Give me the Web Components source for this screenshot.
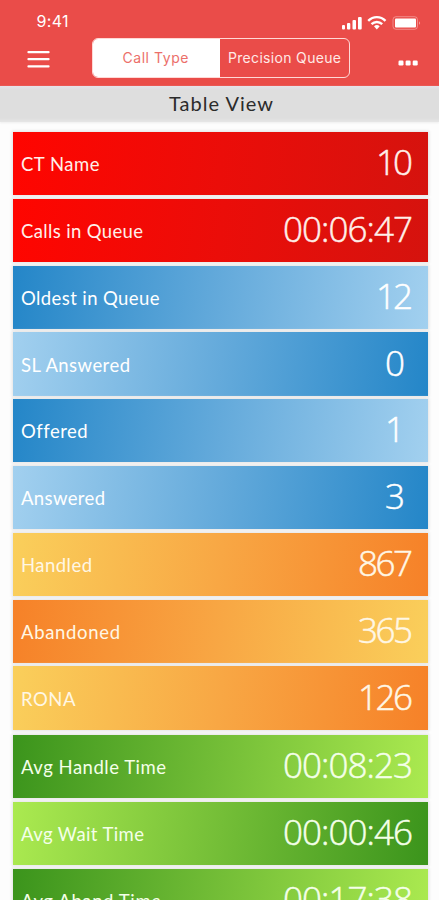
<!DOCTYPE html>
<html lang="en">
<head>
<meta charset="utf-8">
<title>Table View</title>
<style>
  body {
    margin: 0;
    height: 900px;
    overflow: hidden;
    background: #fdfdfd;
    font-family: Lato, "Open Sans", sans-serif;
  }
</style>
</head>
<body>
<queue-screen>
  <status-bar slot="header" time="9:41"></status-bar>
  <nav-bar slot="header">
    <segment-button selected width="66">Call Type</segment-button>
    <segment-button width="113">Precision Queue</segment-button>
  </nav-bar>
  <title-bar slot="title" width="104">Table View</title-bar>

  <metric-row tone="red" width="78.5" value="10" value-width="37">CT Name</metric-row>
  <metric-row tone="red" width="122" value="00:06:47" value-width="130">Calls in Queue</metric-row>
  <metric-row tone="blue" width="138.5" value="12" value-width="37">Oldest in Queue</metric-row>
  <metric-row tone="blue" flip width="109" value="0" value-width="20">SL Answered</metric-row>
  <metric-row tone="blue" width="66" value="1" value-width="20">Offered</metric-row>
  <metric-row tone="blue" flip width="84" value="3" value-width="20">Answered</metric-row>
  <metric-row tone="orange" flip width="71" value="867" value-width="55">Handled</metric-row>
  <metric-row tone="orange" width="99" value="365" value-width="55">Abandoned</metric-row>
  <metric-row tone="orange" flip width="54.5" value="126" value-width="55">RONA</metric-row>
  <metric-row tone="green" first width="145" value="00:08:23" value-width="130">Avg Handle Time</metric-row>
  <metric-row tone="green" flip width="123" value="00:00:46" value-width="130">Avg Wait Time</metric-row>
  <metric-row tone="green" width="140" value="00:17:38" value-width="130">Avg Aband Time</metric-row>
</queue-screen>

<script>
// Tracks the letters of a label so that it takes up a given width.
function fitText(label, text, width) {
  const gaps = text.trim().length - 1;
  const natural = label.getBoundingClientRect().width;

  if (!width || !natural || gaps < 1) return;

  const spacing = (width - natural) / gaps;

  label.style.letterSpacing = `${spacing.toFixed(3)}px`;
  label.style.marginRight = `${(-spacing).toFixed(3)}px`;
}

class QueueScreen extends HTMLElement {
  constructor() {
    super();
    this.attachShadow({ mode: 'open' });
    this.shadowRoot.innerHTML = `
      <style>
        :host {
          display: flex;
          flex-direction: column;
          height: 900px;
          overflow: hidden;
        }

        header {
          flex: none;
          height: 86px;
          background: #ea4c49;
        }

        main {
          display: flex;
          flex-direction: column;
          gap: 3.5px;
          padding: 10px 11px 0 13px;
        }
      </style>
      <header><slot name="header"></slot></header>
      <slot name="title"></slot>
      <main><slot></slot></main>
    `;
  }
}

class StatusBar extends HTMLElement {
  constructor() {
    super();
    this.attachShadow({ mode: 'open' });
  }

  connectedCallback() {
    const time = this.getAttribute('time');

    this.shadowRoot.innerHTML = `
      <style>
        :host {
          display: flex;
          align-items: flex-start;
          justify-content: space-between;
          height: 37px;
          box-sizing: border-box;
          padding: 11px 18px 0 36.5px;
          color: #fff;
          font: 400 16px/20px Inter, sans-serif;
        }

        svg {
          display: block;
          margin-top: 4px;
        }
      </style>
      <span part="time">${time}</span>
      <svg width="80" height="16" viewBox="0 0 80 16" fill="#fff">
        <rect x="1" y="10" width="3" height="4.5" rx="1"/>
        <rect x="6" y="8" width="3.3" height="6.5" rx="1"/>
        <rect x="11.5" y="5" width="3.5" height="9.5" rx="1"/>
        <rect x="17" y="2" width="3.7" height="12.5" rx="1"/>
        <g fill="none" stroke="#fff" stroke-width="2.4">
          <path d="M27.2 5.9C32.2.9 39.5.9 44.5 5.9"/>
          <path d="M30.5 9.1C33.6 6.2 38.1 6.2 41.2 9.1"/>
        </g>
        <path d="M33 11.2Q35.85 9 38.7 11.2L35.85 14.4Z"/>
        <rect x="52" y="1.7" width="24.5" height="12.6" rx="3" fill="none" stroke="#fff" stroke-opacity=".35"/>
        <rect x="54" y="3.5" width="21" height="9" rx="1"/>
        <path d="M78 6.2Q80.2 8 78 9.8Z" fill-opacity=".45"/>
      </svg>
    `;

    fitText(this.shadowRoot.querySelector('span'), time, 32);
  }
}

class NavBar extends HTMLElement {
  constructor() {
    super();
    this.attachShadow({ mode: 'open' });
    this.shadowRoot.innerHTML = `
      <style>
        :host {
          display: grid;
          grid-template-columns: 65px 258px 1fr;
          align-items: center;
          box-sizing: border-box;
          height: 42px;
          padding: 0 21px 0 27px;
        }

        svg {
          display: block;
        }

        .menu {
          margin-top: 2px;
        }

        .more {
          justify-self: end;
          margin-top: 9px;
        }

        .segments {
          display: grid;
          grid-template-columns: 127px 1fr;
          box-sizing: border-box;
          height: 40.5px;
          border: 1.3px solid #ffd9d6;
          border-radius: 6px;
          overflow: hidden;
        }
      </style>
      <svg class="menu" width="23" height="19" viewBox="0 0 23 19" fill="#fff">
        <rect x=".4" y="1" width="22.2" height="2.2" rx="1"/>
        <rect x=".4" y="8" width="22.2" height="2.2" rx="1"/>
        <rect x=".4" y="15.2" width="22.2" height="2.2" rx="1"/>
      </svg>
      <div class="segments"><slot></slot></div>
      <svg class="more" width="20" height="6" viewBox="0 0 20 6" fill="#fff">
        <rect x=".5" y=".5" width="5" height="5" rx="1.2"/>
        <rect x="7.6" y=".5" width="5" height="5" rx="1.2"/>
        <rect x="14.7" y=".5" width="5" height="5" rx="1.2"/>
      </svg>
    `;
  }
}

class SegmentButton extends HTMLElement {
  constructor() {
    super();
    this.attachShadow({ mode: 'open' });
  }

  connectedCallback() {
    this.shadowRoot.innerHTML = `
      <style>
        :host {
          display: flex;
          align-items: center;
          justify-content: center;
          color: #ffe9e6;
          font: 400 14px/20px Inter, sans-serif;
          white-space: nowrap;
        }

        :host([selected]) {
          box-sizing: border-box;
          padding-right: 2px;
          background: #fff;
          color: #ec6f6a;
        }
      </style>
      <span><slot></slot></span>
    `;

    fitText(this.shadowRoot.querySelector('span'), this.textContent, Number(this.getAttribute('width')));
  }
}

class TitleBar extends HTMLElement {
  constructor() {
    super();
    this.attachShadow({ mode: 'open' });
  }

  connectedCallback() {
    this.shadowRoot.innerHTML = `
      <style>
        :host {
          display: flex;
          align-items: center;
          justify-content: center;
          flex: none;
          box-sizing: border-box;
          height: 36px;
          padding: 0 0 2px 3px;
          background: linear-gradient(#e6e2ea, #dedede 4px, #dedede 32px, #e6e6e6);
          box-shadow: 0 1px 2px #eee;
          color: #2b2b2b;
          font-size: 20px;
          line-height: 24px;
          white-space: nowrap;
        }
      </style>
      <span><slot></slot></span>
    `;

    fitText(this.shadowRoot.querySelector('span'), this.textContent, Number(this.getAttribute('width')));
  }
}

class MetricRow extends HTMLElement {
  constructor() {
    super();
    this.attachShadow({ mode: 'open' });
  }

  connectedCallback() {
    const value = this.getAttribute('value');

    this.shadowRoot.innerHTML = `
      <style>
        :host {
          --from: #ff0500;
          --mid: #eb0d09;
          --to: #d5130e;
          --angle: 96deg;
          display: flex;
          align-items: center;
          justify-content: space-between;
          flex: none;
          box-sizing: border-box;
          height: 63.3px;
          padding: 0 15px 0 8px;
          background: linear-gradient(var(--angle), var(--from), var(--mid) 50%, var(--to));
          box-shadow: 0 0 3px 1px #e2e2e2;
          color: #fff;
          white-space: nowrap;
        }

        :host([tone="blue"]) {
          --from: #2486c8;
          --mid: #64aadb;
          --to: #a2d0ef;
        }

        :host([tone="blue"][flip]) {
          --from: #a2d0ef;
          --to: #2486c8;
        }

        :host([tone="orange"]) {
          --from: #f68128;
          --mid: #f8a744;
          --to: #facf5b;
        }

        :host([tone="orange"][flip]) {
          --from: #facf5b;
          --to: #f68128;
        }

        :host([tone="green"]) {
          --from: #3b941c;
          --mid: #74be37;
          --to: #abea50;
        }

        :host([tone="green"][flip]) {
          --from: #abea50;
          --to: #3b941c;
        }

        :host([tone="red"]) {
          color: #fff0ea;
        }

        :host([tone="orange"]) {
          color: #fff7e5;
        }

        :host([tone="green"]) {
          color: #f4ffe9;
        }

        :host([first]) {
          margin-top: 2px;
        }

        .label {
          font-size: 18.5px;
          line-height: 24px;
          padding-top: 1px;
        }

        .value {
          font-family: "Open Sans", "Noto Sans", sans-serif;
          font-size: 35px;
          font-weight: 300;
          line-height: 40px;
          padding-bottom: 3px;
          -webkit-text-stroke: .5px currentColor;
        }

        .single {
          padding-right: 8px;
        }
      </style>
      <span class="label"><slot></slot></span>
      <span class="value${value.length === 1 ? ' single' : ''}">${value}</span>
    `;

    fitText(this.shadowRoot.querySelector('.label'), this.textContent, Number(this.getAttribute('width')));
    fitText(this.shadowRoot.querySelector('.value'), value, Number(this.getAttribute('value-width')));
  }
}

customElements.define('queue-screen', QueueScreen);
customElements.define('status-bar', StatusBar);
customElements.define('nav-bar', NavBar);
customElements.define('segment-button', SegmentButton);
customElements.define('title-bar', TitleBar);
customElements.define('metric-row', MetricRow);
</script>
</body>
</html>
